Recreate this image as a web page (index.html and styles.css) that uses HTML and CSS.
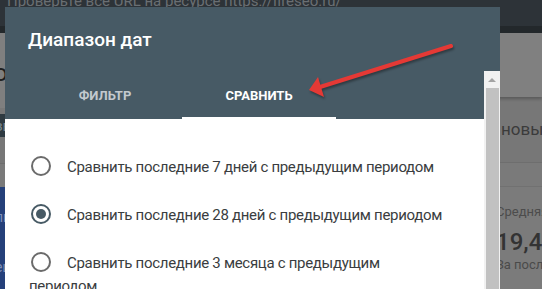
FILE: index.html
```html
<!DOCTYPE html>
<html lang="ru">
<head>
  <meta charset="UTF-8">
  <meta name="viewport" content="width=device-width, initial-scale=1.0">
  <title>Диапазон дат</title>
  <link rel="stylesheet" href="styles.css">
</head>
<body>
  <div class="page">
    <div class="hdr"><span class="hdr-text">Проверьте все URL на ресурсе https://fireseo.ru/</span></div>
    <div class="hdr-edge"></div>
    <div class="main">
      <div class="side">
        <div class="side-head"><span class="side-title">обзор</span></div>
        <div class="side-gap"></div>
        <div class="side-item">звук</div>
        <div class="side-row"></div>
        <div class="side-row2"></div>
        <div class="side-card">
          <div class="side-card-line">лики</div>
          <div class="side-card-line second">еще</div>
        </div>
      </div>
      <div class="content">
        <div class="toolbar"></div>
        <div class="filters"><span class="filters-text">новый фильтр</span></div>
        <div class="filters2"></div>
        <div class="metric">
          <div class="metric-label">Средняя позиция</div>
          <div class="metric-value">19,4</div>
          <div class="metric-note">За последние 3 месяца</div>
        </div>
      </div>
    </div>
  </div>

  <div class="dialog">
    <div class="dialog-title">Диапазон дат</div>
    <div class="dialog-scroll">
      <div class="dialog-inner">
        <div class="tabs">
          <div class="tab">ФИЛЬТР</div>
          <div class="tab active">СРАВНИТЬ</div>
        </div>
        <div class="dialog-body">
          <label class="option"><span class="radio"></span>Сравнить последние 7 дней с предыдущим периодом</label>
          <label class="option"><span class="radio checked"></span>Сравнить последние 28 дней с предыдущим периодом</label>
          <label class="option"><span class="radio"></span>Сравнить последние 3 месяца с предыдущим<br>периодом</label>
        </div>
      </div>
      <div class="scrollbar">
        <div class="scroll-up"></div>
        <div class="scroll-thumb"></div>
      </div>
    </div>
  </div>

  <svg class="arrow" width="542" height="289" viewBox="0 0 542 289">
    <line x1="451" y1="46" x2="320" y2="87" stroke="#e53935" stroke-width="4" stroke-linecap="round"/>
    <polygon points="309,90 318,77 321,87 324,97" fill="#e53935"/>
  </svg>
</body>
</html>
```

FILE: styles.css
```css
body {
  margin: 0;
  width: 542px;
  height: 289px;
  overflow: hidden;
  position: relative;
  font-family: Roboto, "Noto Sans", Arial, sans-serif;
  background-color: #7a7a7a;
}

/* page behind the dialog (dimmed) */
.hdr {
  height: 26px;
  background-color: #2d3338;
  overflow: hidden;
}
.hdr-text {
  display: block;
  margin: -9px 0 0 7px;
  font-size: 15px;
  line-height: 20px;
  color: #6a6f73;
  white-space: nowrap;
}
.hdr-edge {
  height: 7px;
  background-color: #23282b;
}
.main {
  display: flex;
  height: 256px;
}
.side {
  flex: none;
  width: 250px;
  display: flex;
  flex-direction: column;
  overflow: hidden;
}
.side-head {
  height: 75px;
  background-color: #7f7f7f;
  box-sizing: border-box;
  padding-top: 26px;
}
.side-title {
  display: block;
  margin-left: -6px;
  font-size: 24px;
  line-height: 28px;
  color: #1e1e1e;
}
.side-gap {
  height: 6px;
  background-color: #787878;
}
.side-item {
  height: 23px;
  background-color: #2e3a41;
  color: #7b8890;
  font-size: 15px;
  line-height: 25px;
  text-indent: -5px;
}
.side-row {
  height: 26px;
  background-color: #777;
  border-bottom: 1px solid #6e6e6e;
}
.side-row2 {
  height: 23px;
  background-color: #7a7a7a;
}
.side-card {
  flex: 1;
  background-color: #25407a;
  color: #7f8fb8;
  font-size: 14px;
  text-indent: -5px;
  padding-top: 22px;
}
.side-card-line.second {
  margin-top: 34px;
}

.content {
  flex: 1;
  min-width: 0;
  overflow: hidden;
  display: flex;
  flex-direction: column;
}
.toolbar {
  height: 64px;
  background-color: #808080;
  box-shadow: 0 2px 3px rgba(0, 0, 0, 0.25);
  position: relative;
}
.filters {
  height: 66px;
  background-color: #777;
  border-bottom: 1px solid #6e6e6e;
  box-sizing: border-box;
  padding: 20px 0 0 251px;
  font-size: 17px;
  line-height: 24px;
  color: #3b3b3b;
  white-space: nowrap;
}
.filters2 {
  height: 23px;
  background-color: #7a7a7a;
  border-bottom: 1px solid #717171;
}
.metric {
  flex: 1;
  background-color: #7b7b7b;
  padding: 16px 0 0 246px;
  white-space: nowrap;
}
.metric-label {
  font-size: 13px;
  line-height: 18px;
  color: #4c4c4c;
}
.metric-value {
  font-size: 24px;
  line-height: 30px;
  font-weight: 500;
  color: #333;
  margin-top: 6px;
}
.metric-note {
  font-size: 13px;
  line-height: 16px;
  color: #4a4a4a;
}

/* dialog */
.dialog {
  position: absolute;
  left: 5px;
  top: 7px;
  width: 495px;
  bottom: 0;
  background-color: #475a65;
  display: flex;
  flex-direction: column;
}
.dialog-title {
  height: 64px;
  box-sizing: border-box;
  padding: 21px 23px 0;
  font-size: 19px;
  line-height: 24px;
  font-weight: 500;
  color: #fff;
}
.dialog-scroll {
  flex: 1;
  display: flex;
  min-height: 0;
}
.dialog-inner {
  flex: 1;
  background-color: #fff;
  overflow: hidden;
}
.tabs {
  height: 48px;
  display: flex;
  padding-left: 23px;
  background-color: #475a65;
}
.tab {
  width: 154px;
  display: flex;
  align-items: center;
  justify-content: center;
  font-size: 13px;
  font-weight: 700;
  color: #c3c9ce;
  padding-top: 1px;
  box-sizing: border-box;
}
.tab.active {
  color: #fff;
  box-shadow: inset 0 -2px 0 #fff;
}
.dialog-body {
  padding: 37px 30px 0 24px;
}
.option {
  display: block;
  font-size: 15px;
  line-height: 23px;
  letter-spacing: -0.3px;
  color: #3a3d40;
  margin-bottom: 25px;
  white-space: nowrap;
}
.radio {
  display: inline-block;
  width: 20px;
  height: 20px;
  box-sizing: border-box;
  border: 2px solid #6b6b6b;
  border-radius: 50%;
  vertical-align: middle;
  margin: 0 16px 0 2px;
  position: relative;
  top: -2px;
}
.radio.checked {
  border-color: #475a65;
}
.radio.checked::after {
  content: "";
  position: absolute;
  left: 3px;
  top: 3px;
  width: 10px;
  height: 10px;
  border-radius: 50%;
  background-color: #475a65;
}

.scrollbar {
  width: 16px;
  background-color: #f1f1f1;
  display: flex;
  flex-direction: column;
  align-items: center;
}
.scroll-up {
  margin-top: 7px;
  width: 0;
  height: 0;
  border-left: 4px solid transparent;
  border-right: 4px solid transparent;
  border-bottom: 4px solid #a3a3a3;
}
.scroll-thumb {
  flex: 1;
  width: 13px;
  margin-top: 6px;
  background-color: #c1c1c1;
}

.arrow {
  position: absolute;
  left: 0;
  top: 0;
  pointer-events: none;
  filter: drop-shadow(1px 2px 1px rgba(0, 0, 0, 0.35));
}
```
